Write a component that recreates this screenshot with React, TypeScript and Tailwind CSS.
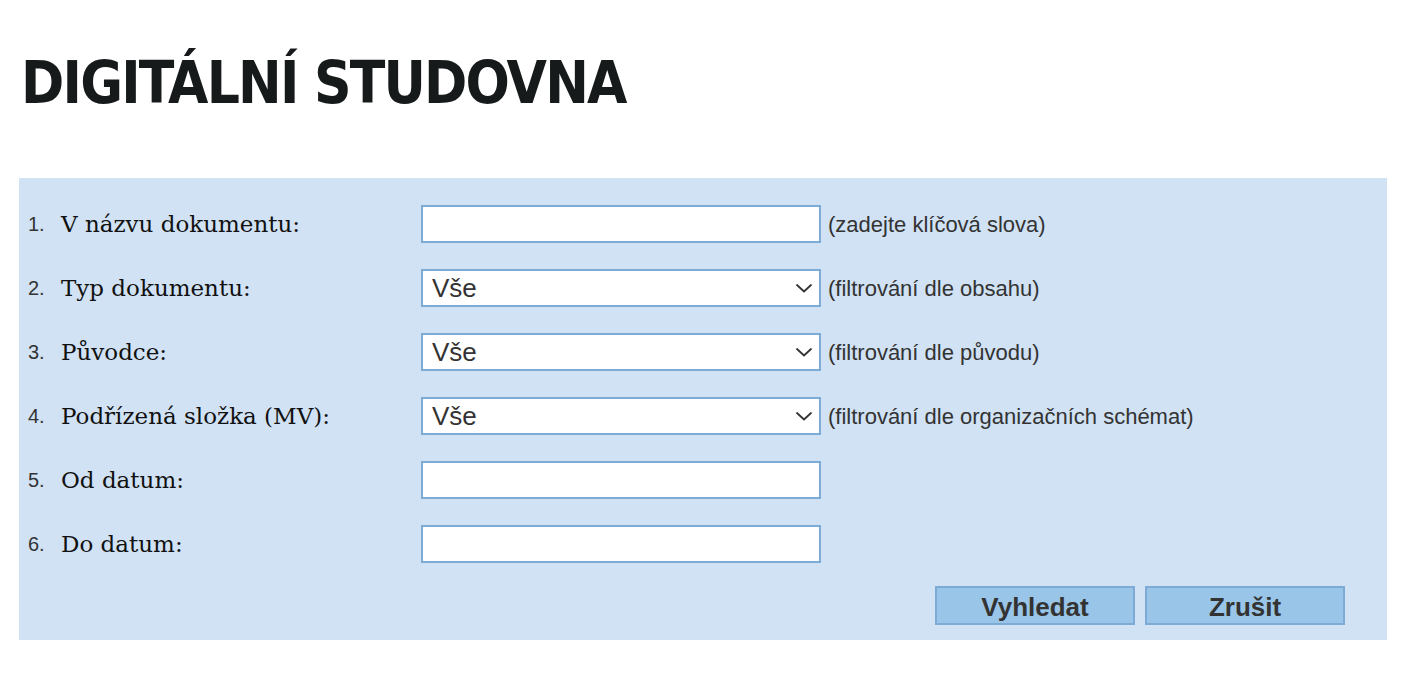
import React from "react";

const rows = [
  { n: "1.", label: "V názvu dokumentu:", type: "input", hint: "(zadejte klíčová slova)" },
  { n: "2.", label: "Typ dokumentu:", type: "select", hint: "(filtrování dle obsahu)" },
  { n: "3.", label: "Původce:", type: "select", hint: "(filtrování dle původu)" },
  { n: "4.", label: "Podřízená složka (MV):", type: "select", hint: "(filtrování dle organizačních schémat)" },
  { n: "5.", label: "Od datum:", type: "input", hint: "" },
  { n: "6.", label: "Do datum:", type: "input", hint: "" },
];

function Chevron() {
  return (
    <svg width="18" height="12" viewBox="0 0 18 12" fill="none" className="shrink-0">
      <path d="M2 3 L9 9.5 L16 3" stroke="#333" strokeWidth="1.8" strokeLinecap="round" strokeLinejoin="round" />
    </svg>
  );
}

const sans = { fontFamily: '"Liberation Sans", Arial, sans-serif' };

export default function App() {
  return (
    <div className="min-h-[688px] bg-white px-[19px] pt-[44px]">
      <h1
        className="pl-[2px] text-[58px] font-bold leading-[78px] text-[#161a1a] tracking-[-1.8px]"
        style={{ fontFamily: '"DejaVu Sans Condensed", "DejaVu Sans", sans-serif' }}
      >
        DIGITÁLNÍ STUDOVNA
      </h1>
      <div className="mt-[56px] w-[1368px] bg-[#d0e2f4] pt-[27px] pb-[15px]">
        <div className="flex flex-col gap-[26px]">
          {rows.map((r) => (
            <div key={r.n} className="flex h-[38px] items-center">
              <div className="w-[42px] pl-[9px] text-[20px] text-[#333]" style={sans}>
                {r.n}
              </div>
              <div
                className="w-[360px] text-[23px] text-[#111]"
                style={{ fontFamily: '"DejaVu Serif", Georgia, serif' }}
              >
                {r.label}
              </div>
              {r.type === "input" ? (
                <div className="h-[38px] w-[400px] border-2 border-[#7eaad6] bg-white" />
              ) : (
                <div className="flex h-[38px] w-[400px] items-center justify-between border-2 border-[#7eaad6] bg-white pl-[9px] pr-[6px]">
                  <span className="text-[26px] text-[#333]" style={sans}>
                    Vše
                  </span>
                  <Chevron />
                </div>
              )}
              {r.hint && (
                <div className="ml-[7px] text-[22px] text-[#333]" style={sans}>
                  {r.hint}
                </div>
              )}
            </div>
          ))}
        </div>
        <div className="mt-[23px] flex justify-end gap-[10px] pr-[42px]">
          {["Vyhledat", "Zrušit"].map((b) => (
            <button
              key={b}
              className="h-[39px] w-[200px] border-2 border-[#7eaad6] bg-[#99c6e8] pb-[2px] text-[26px] font-bold text-[#333]"
              style={sans}
            >
              {b}
            </button>
          ))}
        </div>
      </div>
    </div>
  );
}
